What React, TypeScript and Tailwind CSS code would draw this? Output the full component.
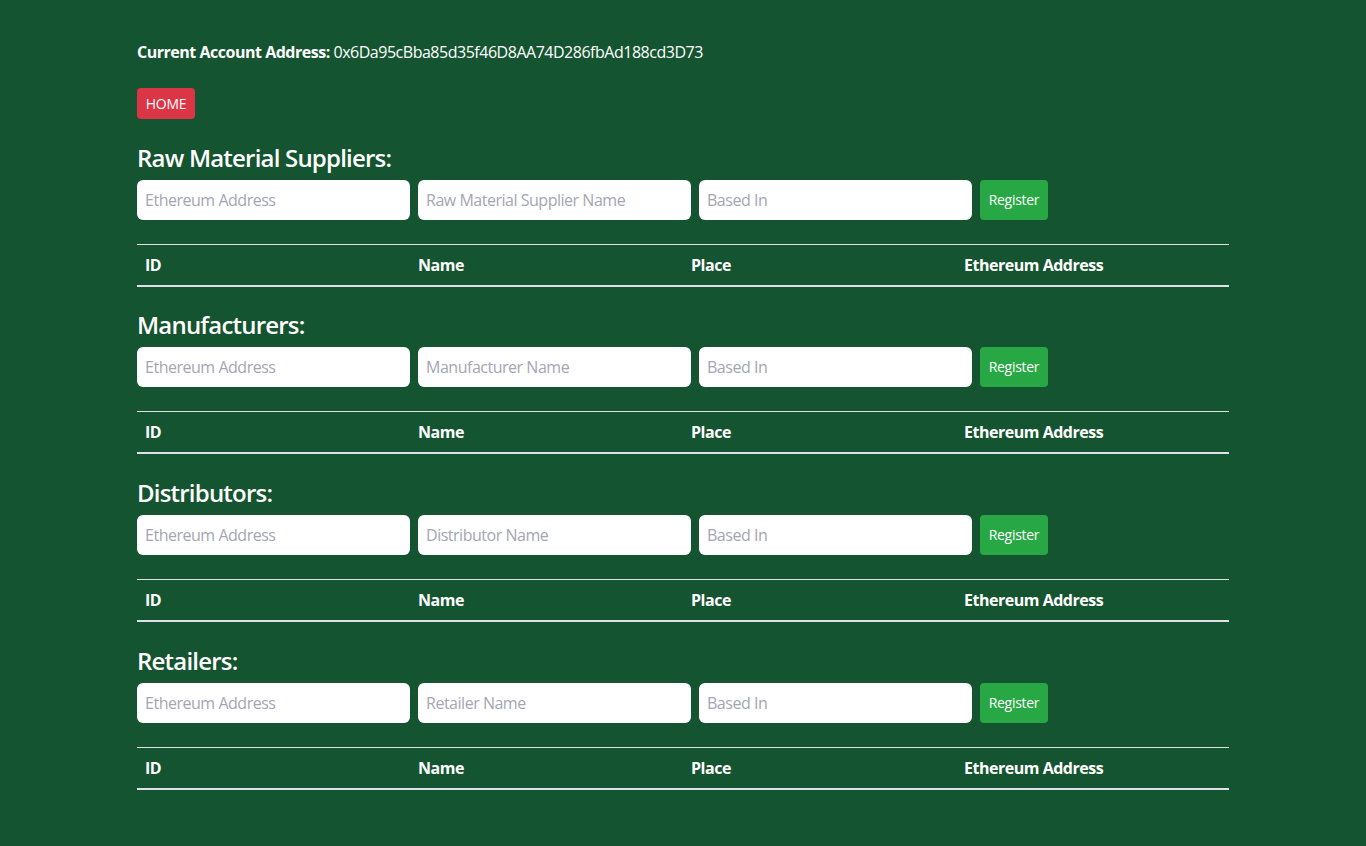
import React from 'react';

const sections = [
    { title: 'Raw Material Suppliers:', namePlaceholder: 'Raw Material Supplier Name' },
    { title: 'Manufacturers:', namePlaceholder: 'Manufacturer Name' },
    { title: 'Distributors:', namePlaceholder: 'Distributor Name' },
    { title: 'Retailers:', namePlaceholder: 'Retailer Name' },
];

const inputClass =
    'w-[273px] h-10 rounded-md bg-white px-2 text-base tracking-[-0.03em] text-gray-800 placeholder:text-[#a3a6b4] outline-none';

function RoleSection({ title, namePlaceholder }: { title: string; namePlaceholder: string }) {
    return (
        <section className="mt-[24.67px]">
            <h4 className="text-2xl font-semibold tracking-[-0.033em] leading-[28px] mb-2 text-white">{title}</h4>
            <form className="flex gap-2" onSubmit={(e) => e.preventDefault()}>
                <input className={inputClass} type="text" placeholder="Ethereum Address" />
                <input className={inputClass} type="text" placeholder={namePlaceholder} />
                <input className={inputClass} type="text" placeholder="Based In" />
                <button type="submit" className="h-10 w-[68px] rounded bg-[#28a745] text-sm tracking-[-0.02em] text-white">
                    Register
                </button>
            </form>
            <table className="w-full mt-6 table-fixed border-collapse">
                <thead>
                    <tr className="border-t border-[#dee2e6] border-b-2">
                        <th className="w-1/4 px-2 py-2 text-left font-bold leading-6">ID</th>
                        <th className="w-1/4 px-2 py-2 text-left font-bold leading-6">Name</th>
                        <th className="w-1/4 px-2 py-2 text-left font-bold leading-6">Place</th>
                        <th className="w-1/4 px-2 py-2 text-left font-bold leading-6">Ethereum Address</th>
                    </tr>
                </thead>
                <tbody></tbody>
            </table>
        </section>
    );
}

export default function App() {
    return (
        <div className="min-h-[846px] bg-[#155430] text-white font-['Open_Sans',sans-serif] tracking-[-0.03em] pb-10">
            <div className="w-[1092px] mx-auto pt-10">
                <p className="text-base leading-6">
                    <b className="font-bold">Current Account Address:</b> 0x6Da95cBba85d35f46D8AA74D286fbAd188cd3D73
                </p>
                <button className="mt-6 h-[31px] w-[58px] rounded bg-[#dc3545] text-sm tracking-[-0.02em] text-white">HOME</button>
                {sections.map((s) => (
                    <RoleSection key={s.title} title={s.title} namePlaceholder={s.namePlaceholder} />
                ))}
            </div>
        </div>
    );
}
